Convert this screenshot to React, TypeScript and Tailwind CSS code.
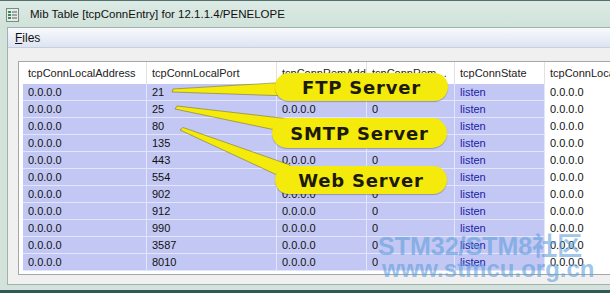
import React from "react";

const PORTS = ["21", "25", "80", "135", "443", "554", "902", "912", "990", "3587", "8010"];

const HEADERS = [
  { label: "tcpConnLocalAddress", w: "w-[124px]" },
  { label: "tcpConnLocalPort", w: "w-[130px]" },
  { label: "tcpConnRemAddress", w: "w-[90px]" },
  { label: "tcpConnRemPort", w: "w-[88px]" },
  { label: "tcpConnState", w: "w-[90px]" },
  { label: "tcpConnLocalAddress", w: "w-[70px]" },
];

const TitleIcon = () => (
  <svg width="13" height="14" viewBox="0 0 13 14">
    <rect x="0.5" y="0.5" width="12" height="13" fill="#e8ece8" stroke="#7a8a84" />
    <rect x="2" y="3" width="3" height="2" fill="#3c8a5a" />
    <rect x="2" y="6" width="3" height="2" fill="#3c8a5a" />
    <rect x="2" y="9" width="3" height="2" fill="#3c8a5a" />
    <rect x="6" y="3" width="5" height="2" fill="#9aa6a2" />
    <rect x="6" y="6" width="5" height="2" fill="#9aa6a2" />
    <rect x="6" y="9" width="5" height="2" fill="#9aa6a2" />
  </svg>
);

const Callout = ({ label, className }: { label: string; className: string }) => (
  <div
    className={`absolute flex items-center justify-center rounded-full bg-[#f4ea0c] text-[#1c1a08] font-bold text-[18px] tracking-[0.8px] shadow-[0_1px_1px_rgba(0,0,0,0.25)] ${className}`}
    style={{ fontFamily: '"DejaVu Sans", Verdana, sans-serif' }}
  >
    {label}
  </div>
);

export default function App() {
  return (
    <div
      className="relative w-[610px] h-[293px] overflow-hidden bg-[#d3e3dc] border-t border-[#55706a] flex flex-col"
      style={{ fontFamily: '"Liberation Sans", Arial, sans-serif' }}
    >
      {/* title bar */}
      <div className="h-[26px] flex items-center gap-[11px] pl-[6px] pt-[2px] bg-gradient-to-b from-[#dcebe5] to-[#cfe2da] text-[11.5px] text-[#111]">
        <TitleIcon />
        <span>Mib Table [tcpConnEntry] for 12.1.1.4/PENELOPE</span>
      </div>

      {/* client area */}
      <div className="ml-[7px] flex-1 flex flex-col border-l border-t border-[#9fb2ac] bg-[#f0f0f0]">
        <div className="h-[20px] flex items-center pl-[7px] bg-gradient-to-b from-[#f8f9fc] to-[#dde4f2] border-b border-[#c8cfdc] text-[12px] text-[#111]">
          <span>
            <span className="underline">F</span>iles
          </span>
        </div>

        <div className="flex-1 pl-[10px] pt-[13px] pb-[9px]">
          <div className="h-full border border-r-0 border-[#a6a6a6] bg-white pl-[4px] overflow-hidden">
            <div className="flex h-[22px] items-center text-[11px] text-[#222]">
              {HEADERS.map((h, i) => (
                <div
                  key={i}
                  className={`${h.w} shrink-0 h-full flex items-center pl-[5px] pr-[2px] border-r border-[#e2e2e2] whitespace-nowrap overflow-hidden`}
                >
                  <span className={i === 3 ? "truncate" : ""}>{h.label}</span>
                </div>
              ))}
            </div>
            {PORTS.map((p) => (
              <div key={p} className="flex h-[17px] text-[11px] text-[#111]">
                {["0.0.0.0", p, "0.0.0.0", "0", "listen"].map((v, j) => (
                  <div
                    key={j}
                    className={`${HEADERS[j].w} shrink-0 flex items-center pl-[5px] bg-[#c3c7f3] border-b border-r border-[#e3e5fb] ${j === 4 ? "text-[#2020a8]" : ""}`}
                  >
                    {v}
                  </div>
                ))}
                <div className="w-[70px] shrink-0 flex items-center pl-[5px] border-b border-white">0.0.0.0</div>
              </div>
            ))}
          </div>
        </div>
      </div>

      {/* bottom frame */}
      <div className="h-[6px] ml-[7px] border-t border-[#9fb2ac]" />
      <div className="h-[3px] bg-[#2f5a56]" />

      {/* callout wedges */}
      <svg className="absolute left-0 top-0 pointer-events-none" width="610" height="293">
        <g fill="#f4ea0c" stroke="rgba(60,50,0,0.45)" strokeWidth="0.8">
          <polygon points="172,91 173,88 290,81 290,95" />
          <polygon points="175,108 177,105 290,118 290,132" />
          <polygon points="180,129 183,126.5 290,164 290,180" />
        </g>
      </svg>

      <Callout label="FTP Server" className="left-[275px] top-[72px] w-[173px] h-[28px]" />
      <Callout label="SMTP Server" className="left-[272px] top-[117px] w-[175px] h-[30px]" />
      <Callout label="Web Server" className="left-[275px] top-[165px] w-[172px] h-[28px]" />

      {/* watermark */}
      <div
        className="absolute left-[378px] top-[233px] flex flex-col items-start pointer-events-none text-[rgba(96,160,220,0.62)] font-bold leading-none"
        style={{ fontFamily: '"Liberation Sans", "Noto Sans CJK SC", sans-serif' }}
      >
        <span className="text-[25px]">STM32/STM8社区</span>
        <span className="text-[24px] ml-[4px] mt-[-2px]">www.stmcu.org.cn</span>
      </div>
    </div>
  );
}
